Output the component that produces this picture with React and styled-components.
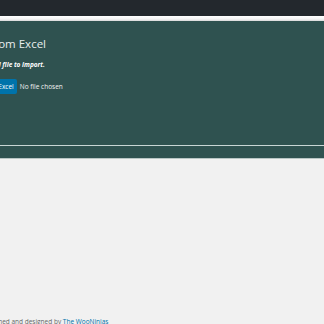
import styled, { createGlobalStyle } from "styled-components";

const GlobalStyle = createGlobalStyle`
  html, body {
    margin: 0;
    padding: 0;
    background: #f1f1f1;
    overflow: hidden;
    font-family: "Open Sans", "Liberation Sans", Arial, sans-serif;
  }
`;

const Page = styled.div`
  width: 324px;
  height: 324px;
  display: flex;
  flex-direction: column;
  overflow: hidden;
`;

const AdminBar = styled.div`
  height: 16px;
  background-color: #23282d;
  flex-shrink: 0;
`;

const Strip = styled.div`
  height: 5px;
  background: linear-gradient(#ffffff 0%, #f4f4f4 60%, #d9d9d9 100%);
  flex-shrink: 0;
`;

const Panel = styled.div`
  background-color: #2f5250;
  height: 137px;
  flex-shrink: 0;
  display: flex;
  flex-direction: column;
  border-bottom: 1px solid #b9c6c5;
`;

const Content = styled.div`
  margin-left: -46px;
  padding-top: 14px;
  flex: 1;
  display: flex;
  flex-direction: column;
  align-items: flex-start;
`;

const Title = styled.h1`
  margin: 0 0 0 -4px;
  font-size: 11.5px;
  font-weight: 400;
  color: #e8eeee;
  line-height: 18px;
  white-space: nowrap;
`;

const Hint = styled.p`
  margin: 7px 0 0 -1px;
  font-size: 6.5px;
  font-weight: 700;
  font-style: italic;
  color: #ffffff;
  white-space: nowrap;
`;

const FileRow = styled.div`
  margin-top: 10px;
  margin-left: 15px;
  display: flex;
  align-items: center;
  gap: 3px;
`;

const Button = styled.span`
  display: inline-flex;
  align-items: center;
  height: 15px;
  padding: 0 3px 0 5px;
  background-color: #0073aa;
  border-radius: 2px;
  color: #ffffff;
  font-size: 6.5px;
  white-space: nowrap;
`;

const FileName = styled.span`
  font-size: 6.5px;
  color: #f2f2f2;
  white-space: nowrap;
`;

const Divider = styled.div`
  height: 1px;
  background-color: #c9d6d5;
  margin-bottom: 12px;
`;

const Spacer = styled.div`
  flex: 1;
`;

const Footer = styled.div`
  margin-left: -15px;
  height: 6px;
  font-size: 6.5px;
  line-height: 8px;
  color: #666666;
  white-space: nowrap;

  a {
    color: #0073aa;
    text-decoration: none;
  }
`;

export default function App() {
  return (
    <>
      <GlobalStyle />
      <Page>
        <AdminBar />
        <Strip />
        <Panel>
          <Content>
            <Title>Import from Excel</Title>
            <Hint>Select the Excel file to import.</Hint>
            <FileRow>
              <Button>Choose Excel</Button>
              <FileName>No file chosen</FileName>
            </FileRow>
          </Content>
          <Divider />
        </Panel>
        <Spacer />
        <Footer>
          Planned and designed by <a href="#">The WooNinjas</a>
        </Footer>
      </Page>
    </>
  );
}
